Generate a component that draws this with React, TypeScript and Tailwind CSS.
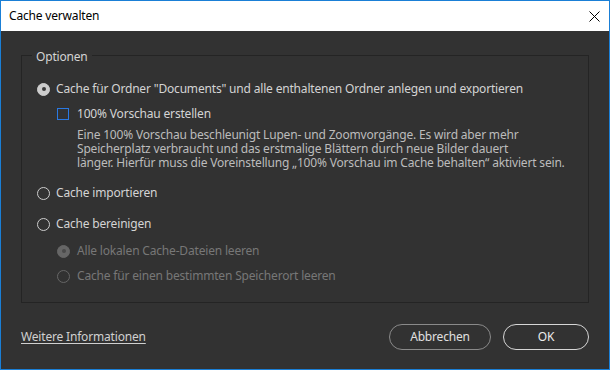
import React from "react";

function Radio({ checked, disabled }: { checked?: boolean; disabled?: boolean }) {
  const ring = disabled ? "border-[#666666]" : "border-[#cdcdcd]";
  const fill = checked ? (disabled ? "bg-[#666666]" : "bg-[#cdcdcd]") : "bg-transparent";
  return (
    <span
      className={`flex h-[13px] w-[13px] shrink-0 items-center justify-center rounded-full border-[1.5px] ${ring} ${fill}`}
    >
      {checked && (
        <span className={`h-[4px] w-[4px] rounded-full ${disabled ? "bg-[#4a4a4a]" : "bg-[#3a3a3a]"}`} />
      )}
    </span>
  );
}

export default function App() {
  return (
    <div className="flex h-[370px] w-[610px] flex-col border border-[#1a7fd6] font-['Noto_Sans',sans-serif] text-[12px] leading-[16px] tracking-[-0.18px]">
      <div className="flex h-[30px] items-center justify-between bg-white pl-[8px] pr-[9px] text-black">
        <span>Cache verwalten</span>
        <svg width="11" height="11" viewBox="0 0 11 11">
          <path d="M0.5 0.5 L10.5 10.5 M10.5 0.5 L0.5 10.5" stroke="#000" strokeWidth="1" fill="none" />
        </svg>
      </div>

      <div className="flex flex-1 flex-col bg-[#323232] px-[20px] pt-[24px] text-[#d4d4d4]">
        <div className="relative h-[248px] border border-[#242424] pl-[15px] pt-[25px]">
          <span className="absolute left-[10px] top-[-7px] bg-[#323232] px-[4px] text-[#d4d4d4]">Optionen</span>

          <div className="flex h-[16px] items-center gap-[6px]">
            <Radio checked />
            <span>Cache für Ordner "Documents" und alle enthaltenen Ordner anlegen und exportieren</span>
          </div>

          <div className="ml-[20px] mt-[9px] flex h-[16px] items-center gap-[8px]">
            <span className="h-[12px] w-[12px] shrink-0 border border-[#2a79e2]" />
            <span>100% Vorschau erstellen</span>
          </div>

          <p className="ml-[40px] mt-[6px] leading-[14px] text-[#bcbcbc]">
            Eine 100% Vorschau beschleunigt Lupen- und Zoomvorgänge. Es wird aber mehr
            <br />
            Speicherplatz verbraucht und das erstmalige Blättern durch neue Bilder dauert
            <br />
            länger. Hierfür muss die Voreinstellung „100% Vorschau im Cache behalten“ aktiviert sein.
          </p>

          <div className="mt-[15px] flex h-[16px] items-center gap-[6px]">
            <Radio />
            <span>Cache importieren</span>
          </div>

          <div className="mt-[15px] flex h-[16px] items-center gap-[6px]">
            <Radio />
            <span>Cache bereinigen</span>
          </div>

          <div className="ml-[20px] mt-[11px] flex h-[16px] items-center gap-[7px] text-[#777777]">
            <Radio checked disabled />
            <span>Alle lokalen Cache-Dateien leeren</span>
          </div>

          <div className="ml-[20px] mt-[9px] flex h-[16px] items-center gap-[7px] text-[#777777]">
            <Radio disabled />
            <span>Cache für einen bestimmten Speicherort leeren</span>
          </div>
        </div>

        <div className="mt-[21px] flex items-center justify-between">
          <a href="#" className="text-[#d0d0d0] underline underline-offset-2">
            Weitere Informationen
          </a>
          <div className="flex gap-[12px]">
            <button className="h-[26px] w-[102px] rounded-full border-[1.5px] border-[#8a8a8a] text-[#e0e0e0]">
              Abbrechen
            </button>
            <button className="h-[26px] w-[86px] rounded-full border-[1.5px] border-[#d6d6d6] text-[#ececec]">
              OK
            </button>
          </div>
        </div>
      </div>
    </div>
  );
}
